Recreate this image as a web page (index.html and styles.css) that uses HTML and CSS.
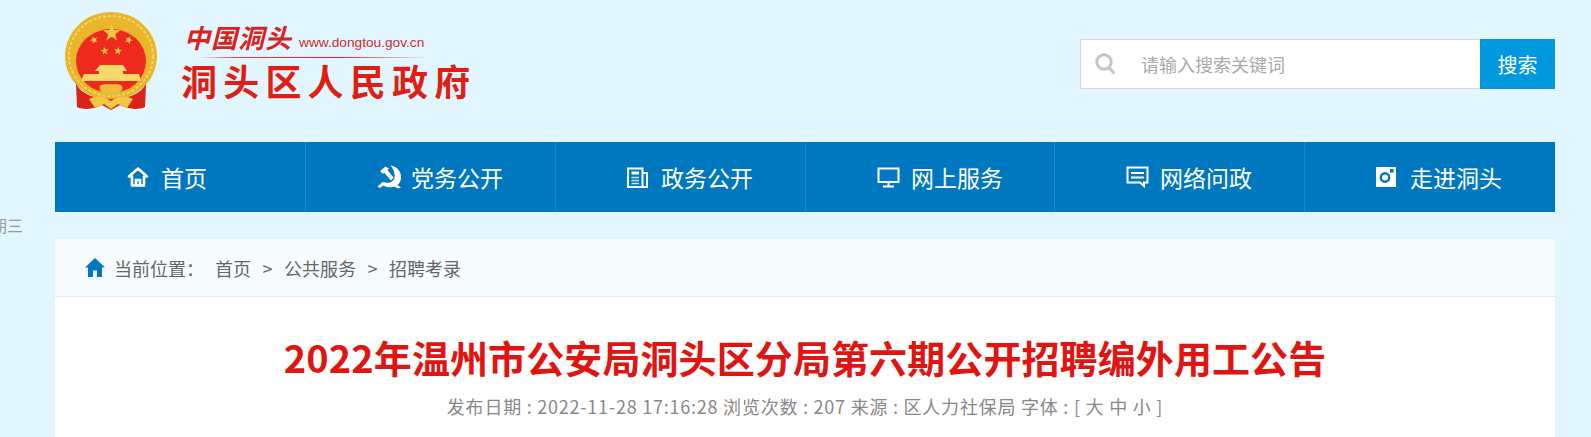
FILE: index.html
```html
<!DOCTYPE html>
<html lang="zh-CN">
<head>
    <meta charset="UTF-8">
    <meta name="viewport" content="width=device-width, initial-scale=1.0">
    <title>2022年温州市公安局洞头区分局第六期公开招聘编外用工公告</title>
    <link rel="stylesheet" href="styles.css">
</head>
<body>
    <div class="wrap">
        <header class="header">
            <a class="logo" href="#">
                <svg class="emblem" viewBox="64 11 94 100" aria-hidden="true">
                    <defs>
                        <polygon id="star" points="0,-10 2.35,-3.24 9.51,-3.09 3.8,1.24 5.88,8.09 0,4 -5.88,8.09 -3.8,1.24 -9.51,-3.09 -2.35,-3.24"/>
                    </defs>
                    <ellipse cx="111" cy="56" rx="46" ry="44" fill="#e9b52c"/>
                    <ellipse cx="111" cy="56" rx="42" ry="40" fill="none" stroke="#f6d55c" stroke-width="2" stroke-dasharray="3 2"/>
                    <ellipse cx="111" cy="61" rx="35" ry="32" fill="#ee2a1e"/>
                    <path d="M76 84 C82 95 96 99 111 99 C126 99 140 95 146 84 L145 107 C136 111 126 108 120 105 L111 110 L102 105 C96 108 86 111 77 107 Z" fill="#d9231b"/>
                    <g fill="#f3c93f">
                        <use href="#star" transform="translate(111.7 33) scale(.92)"/>
                        <use href="#star" transform="translate(94 40) rotate(-20) scale(.42)"/>
                        <use href="#star" transform="translate(128.7 40) rotate(20) scale(.42)"/>
                        <use href="#star" transform="translate(104.7 51) rotate(-10) scale(.42)"/>
                        <use href="#star" transform="translate(118 51) rotate(10) scale(.42)"/>
                    </g>
                    <path d="M100 65 H123 L127 71 H123 V74 H139 L141 81 H81 L84 74 H99 V71 H95 Z" fill="#f7d969"/>
                    <path d="M100 86 C104 83 107 85 111 84 C115 85 118 83 122 86 C124 90 120 94 111 94 C102 94 98 90 100 86 Z" fill="#edbd3a"/>
                    <path d="M89 99 C97 95 105 97 111 101 C117 97 125 95 133 99 L127 108 L118 104 L111 109 L104 104 L95 108 Z" fill="#f1c945"/>
                </svg>
                <div class="logo-text">
                    <div class="logo-top">
                        <span class="logo-cn">中国洞头</span>
                        <span class="logo-url">www.dongtou.gov.cn</span>
                    </div>
                    <div class="logo-rule"></div>
                    <div class="logo-name">洞头区人民政府</div>
                </div>
            </a>
            <form class="search">
                <svg class="search-icon" viewBox="0 0 20 21" aria-hidden="true">
                    <circle cx="9" cy="9" r="7.2" fill="none" stroke="#c6c6c6" stroke-width="3"/>
                    <path d="M14 14.5 L18.5 19.5" stroke="#c6c6c6" stroke-width="3.2" stroke-linecap="round"/>
                </svg>
                <input class="search-input" type="text" placeholder="请输入搜索关键词">
                <button class="search-btn" type="button">搜索</button>
            </form>
        </header>

        <nav class="nav">
            <a class="nav-item" href="#">
                <span class="nav-icon">
                    <svg width="22" height="22" viewBox="0 0 22 22" fill="none" stroke="#fff" stroke-width="2.6">
                        <path d="M2 10.5 L11 2.5 L20 10.5 H17 V19.5 H5 V10.5 Z" stroke-linejoin="round"/>
                        <path d="M9 19.5 V14 H13 V19.5"/>
                    </svg>
                </span>
                首页
            </a>
            <a class="nav-item" href="#">
                <span class="nav-icon">
                    <svg width="25" height="24" viewBox="0 0 24 24" fill="#fff">
                        <path d="M13 0.5 C20 1.5 24 7 23.5 13 C23.2 16 22 18.5 20 20 L23.5 22.5 L20.5 23.5 L16.5 21.5 C13 23 9 22.5 6 20.5 L2.5 23 L0 21.5 L5 17 L8 17.5 C11.5 18.5 15.5 17 16.8 13.5 C18 9.5 16.5 4.5 13 0.5 Z"/>
                        <path d="M2.5 6 L8 1.5 L11.5 3.5 L10 5 L16 12.5 L13.5 15.5 L6.5 7.5 L5.5 9 Z"/>
                    </svg>
                </span>
                党务公开
            </a>
            <a class="nav-item" href="#">
                <span class="nav-icon">
                    <svg width="21" height="21" viewBox="0 0 21 21" fill="none" stroke="#fff" stroke-width="2">
                        <path d="M1 1.5 H15.5 V20 H1 Z M15.5 6 H20 V20 H15.5"/>
                        <path d="M4.5 6 H12" stroke-width="3"/>
                        <path d="M4.5 10.5 H12 M4.5 13.5 H12 M4.5 16.5 H12" stroke-width="1.5" opacity=".8"/>
                    </svg>
                </span>
                政务公开
            </a>
            <a class="nav-item" href="#">
                <span class="nav-icon">
                    <svg width="23" height="21" viewBox="0 0 23 21" fill="none" stroke="#fff" stroke-width="2">
                        <path d="M1.5 1.5 H21.5 V15 H1.5 Z"/>
                        <path d="M11.5 15 V19.5 M6 19.5 H17"/>
                    </svg>
                </span>
                网上服务
            </a>
            <a class="nav-item" href="#">
                <span class="nav-icon">
                    <svg width="23" height="22" viewBox="0 0 23 22" fill="none" stroke="#fff" stroke-width="2">
                        <path d="M1.5 1.5 H21.5 V16.5 H18 V20 L14 16.5 H1.5 Z"/>
                        <path d="M5 7 H18 M5 11.5 H18"/>
                    </svg>
                </span>
                网络问政
            </a>
            <a class="nav-item" href="#">
                <span class="nav-icon">
                    <svg width="20" height="20" viewBox="0 0 20 20">
                        <rect width="20" height="20" fill="#fff"/>
                        <circle cx="9" cy="10.5" r="4.2" fill="none" stroke="#0078bf" stroke-width="2.4"/>
                        <rect x="14" y="2" width="3.6" height="3.6" fill="#0078bf"/>
                    </svg>
                </span>
                走进洞头
            </a>
        </nav>

        <div class="date-strip">星期三</div>

        <div class="crumbs">
            <svg class="crumbs-home" viewBox="0 0 20 19" aria-hidden="true">
                <path d="M10 0 L20 9.5 H17 V19 H12 V12.5 H8 V19 H3 V9.5 H0 Z" fill="#0078bf"/>
            </svg>
            <span class="crumbs-label">当前位置：</span>
            <a href="#">首页</a>
            <span class="crumbs-sep">&gt;</span>
            <a href="#">公共服务</a>
            <span class="crumbs-sep">&gt;</span>
            <a href="#">招聘考录</a>
        </div>

        <main class="article">
            <h1 class="article-title">2022年温州市公安局洞头区分局第六期公开招聘编外用工公告</h1>
            <p class="article-meta">发布日期 : 2022-11-28 17:16:28 浏览次数 : 207 来源 : 区人力社保局 字体 : [ 大 中 小 ]</p>
        </main>
    </div>
</body>
</html>
```

FILE: styles.css
```css
html, body {
    overflow: hidden;
}
body {
    margin: 0;
    background-color: #e1f6ff;
    font-family: "Noto Sans CJK SC", sans-serif;
    color: #666;
}
a {
    color: inherit;
    text-decoration: none;
}
.wrap {
    width: 1500px;
    margin-left: 55px;
}

/* header */
.header {
    height: 142px;
    display: flex;
    justify-content: space-between;
    align-items: flex-start;
}
.logo {
    display: flex;
    padding: 11px 0 0 9px;
}
.emblem {
    width: 94px;
    height: 100px;
}
.logo-text {
    margin-left: 23px;
    width: 294px;
}
.logo-top {
    display: flex;
    align-items: flex-end;
    height: 42px;
    margin-left: 3px;
}
.logo-cn {
    font-size: 26px;
    line-height: 32px;
    font-weight: 700;
    font-style: italic;
    letter-spacing: 1px;
    color: #d9231b;
}
.logo-url {
    margin-left: 7px;
    font-family: "Liberation Sans", sans-serif;
    font-size: 13.7px;
    line-height: 20px;
    color: #c9302a;
}
.logo-rule {
    width: 232px;
    height: 1px;
    margin: 4px 0 0 17px;
    background: linear-gradient(to right, #e1f6ff, #e0483e 15%, #d9231b 60%, #e1f6ff);
}
.logo-name {
    font-size: 36px;
    line-height: 44px;
    font-weight: 700;
    letter-spacing: 6.2px;
    white-space: nowrap;
    color: #e01f14;
}
.search {
    display: flex;
    margin-top: 39px;
    width: 475px;
    height: 50px;
    box-sizing: border-box;
    background-color: #fff;
    border: 1px solid #d4d8da;
    border-right: none;
}
.search-icon {
    width: 20px;
    height: 21px;
    margin: 13px 0 0 14px;
}
.search-input {
    flex: 1;
    min-width: 0;
    margin-left: 26px;
    padding: 0;
    border: none;
    outline: none;
    font-family: inherit;
    font-size: 18px;
    background: transparent;
}
.search-input::placeholder {
    color: #aaa;
    opacity: 1;
}
.search-btn {
    width: 75px;
    margin: -1px 0;
    border: none;
    padding: 0;
    background-color: #0099dd;
    color: #fff;
    font-family: inherit;
    font-size: 20px;
}

/* nav */
.nav {
    display: grid;
    grid-template-columns: 250px 250px 250px 249px 250px 1fr;
    height: 70px;
    background-color: #0078bf;
}
.nav-item {
    display: flex;
    align-items: center;
    box-sizing: border-box;
    padding-left: 71px;
    border-left: 1px solid #1a88c8;
    color: #fff;
    font-size: 23px;
}
.nav-item:first-child {
    padding-left: 72px;
    border-left: none;
}
.nav-icon {
    width: 34px;
    display: flex;
    align-items: center;
}

/* the clock overflows off the left side of the page */
.date-strip {
    height: 27px;
    margin-left: -80px;
    font-size: 16px;
    line-height: 27px;
    color: #999;
    white-space: nowrap;
}

/* breadcrumb */
.crumbs {
    display: flex;
    align-items: center;
    height: 57px;
    box-sizing: content-box;
    padding-left: 30px;
    background-color: #f6fbfe;
    border-bottom: 1px solid #e3e8ec;
    font-size: 18px;
}
.crumbs-home {
    width: 20px;
    height: 19px;
    margin-right: 9px;
}
.crumbs-label {
    width: 101px;
}
.crumbs-sep {
    margin: 0 11.5px;
}

/* article */
.article {
    background-color: #fff;
    padding: 39px 0 20px;
    text-align: center;
}
.article-title {
    margin: 0;
    font-size: 38px;
    line-height: 42px;
    font-weight: 700;
    letter-spacing: .1px;
    color: #e01410;
}
.article-meta {
    margin: 15px 0 0;
    font-size: 18px;
    line-height: 26px;
    letter-spacing: .77px;
    color: #888;
}
```
